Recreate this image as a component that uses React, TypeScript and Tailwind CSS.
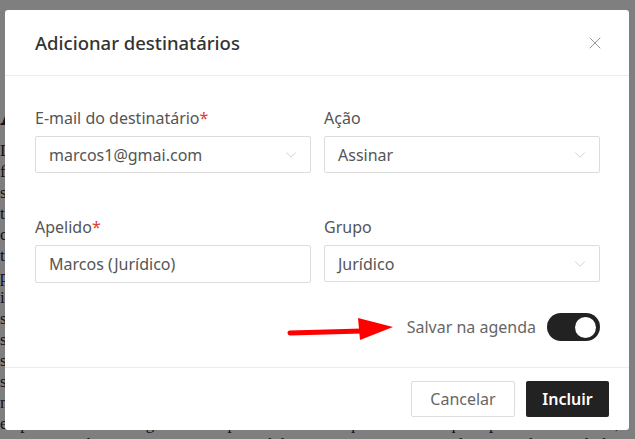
import { X, ChevronDown } from "lucide-react";

const font = { fontFamily: '"Noto Sans", "Open Sans", sans-serif' };

const pageText =
  "Lorem ipsum dolor sit amet, consectetur adipiscing elit. Vestibulum sodales, nulla vitae facilisis volutpat, augue mauris tristique mi, ac fringilla ante sem non sapien. Curabitur sagittis lectus at eros luctus, eu pretium libero congue. Class aptent taciti sociosqu ad litora torquent per conubia nostra, per inceptos himenaeos. ";

function Label({ text, required }: { text: string; required?: boolean }) {
  return (
    <div className="mb-2 text-[16px] leading-5 text-[#555]">
      {text}
      {required && <span className="text-[#e53935]">*</span>}
    </div>
  );
}

function SelectBox({ value }: { value: string }) {
  return (
    <div className="flex h-[37px] items-center justify-between rounded-[2px] border border-[#dcdcdc] pl-[13px] pr-[10px] text-[16px] text-[#555]">
      <span>{value}</span>
      <ChevronDown className="h-[18px] w-[18px] text-[#c0c0c0]" strokeWidth={1} />
    </div>
  );
}

function TextBox({ value }: { value: string }) {
  return (
    <div className="flex h-[38px] items-center rounded-[2px] border border-[#dcdcdc] pl-[13px] text-[16px] text-[#555]">
      {value}
    </div>
  );
}

export default function App() {
  return (
    <div className="relative h-[439px] w-[635px] overflow-hidden bg-white" style={font}>
      {/* page content behind the dialog */}
      <div
        className="pt-[92px] text-[17px] leading-[21px] text-[#2a2040]"
        style={{ fontFamily: '"Liberation Serif", serif' }}
      >
        <div className="mb-2 text-[40px] font-bold leading-[40px]">A</div>
        {pageText.repeat(8)}
      </div>
      <div className="absolute inset-0 bg-black/50" />

      {/* dialog */}
      <div className="absolute left-[5px] top-[10px] flex h-[420px] w-[624px] flex-col rounded-[3px] bg-white">
        <div className="flex h-[66px] shrink-0 items-center justify-between border-b border-[#ececec] pl-[30px] pr-[24px]">
          <h2 className="text-[18.5px] font-medium text-[#333]">Adicionar destinatários</h2>
          <X className="h-[20px] w-[20px] text-[#9a9a9a]" strokeWidth={1.2} />
        </div>

        <div className="relative flex-1 border-b border-[#ececec] pl-[30px] pr-[29px] pt-[32px]">
          <div className="grid grid-cols-2 gap-x-[13px] gap-y-[44px]">
            <div>
              <Label text="E-mail do destinatário" required />
              <SelectBox value="marcos1@gmai.com" />
            </div>
            <div>
              <Label text="Ação" />
              <SelectBox value="Assinar" />
            </div>
            <div>
              <Label text="Apelido" required />
              <TextBox value="Marcos (Jurídico)" />
            </div>
            <div>
              <Label text="Grupo" />
              <SelectBox value="Jurídico" />
            </div>
          </div>

          <div className="mt-[30px] flex items-center justify-end gap-[11px]">
            <span className="text-[16px] text-[#666]">Salvar na agenda</span>
            <div className="flex h-[28px] w-[53px] items-center justify-end rounded-full bg-[#222] pr-[4px]">
              <div className="h-[21px] w-[21px] rounded-full bg-white" />
            </div>
          </div>

          {/* red pointer arrow */}
          <svg className="absolute left-[275px] top-[229px]" width="120" height="40" viewBox="0 0 120 40">
            <path d="M10 28 L82 26" stroke="#f00" strokeWidth="5" strokeLinecap="round" />
            <path d="M78 13 L113 22 L80 35 Z" fill="#f00" />
          </svg>
        </div>

        <div className="flex h-[62px] shrink-0 items-center justify-end gap-[11px] pr-[20px]">
          <button className="h-[36px] w-[104px] rounded-[2px] border border-[#ddd] text-[16px] text-[#666]">
            Cancelar
          </button>
          <button className="h-[36px] w-[83px] rounded-[2px] bg-[#222] text-[16px] font-semibold text-white">
            Incluir
          </button>
        </div>
      </div>
    </div>
  );
}
